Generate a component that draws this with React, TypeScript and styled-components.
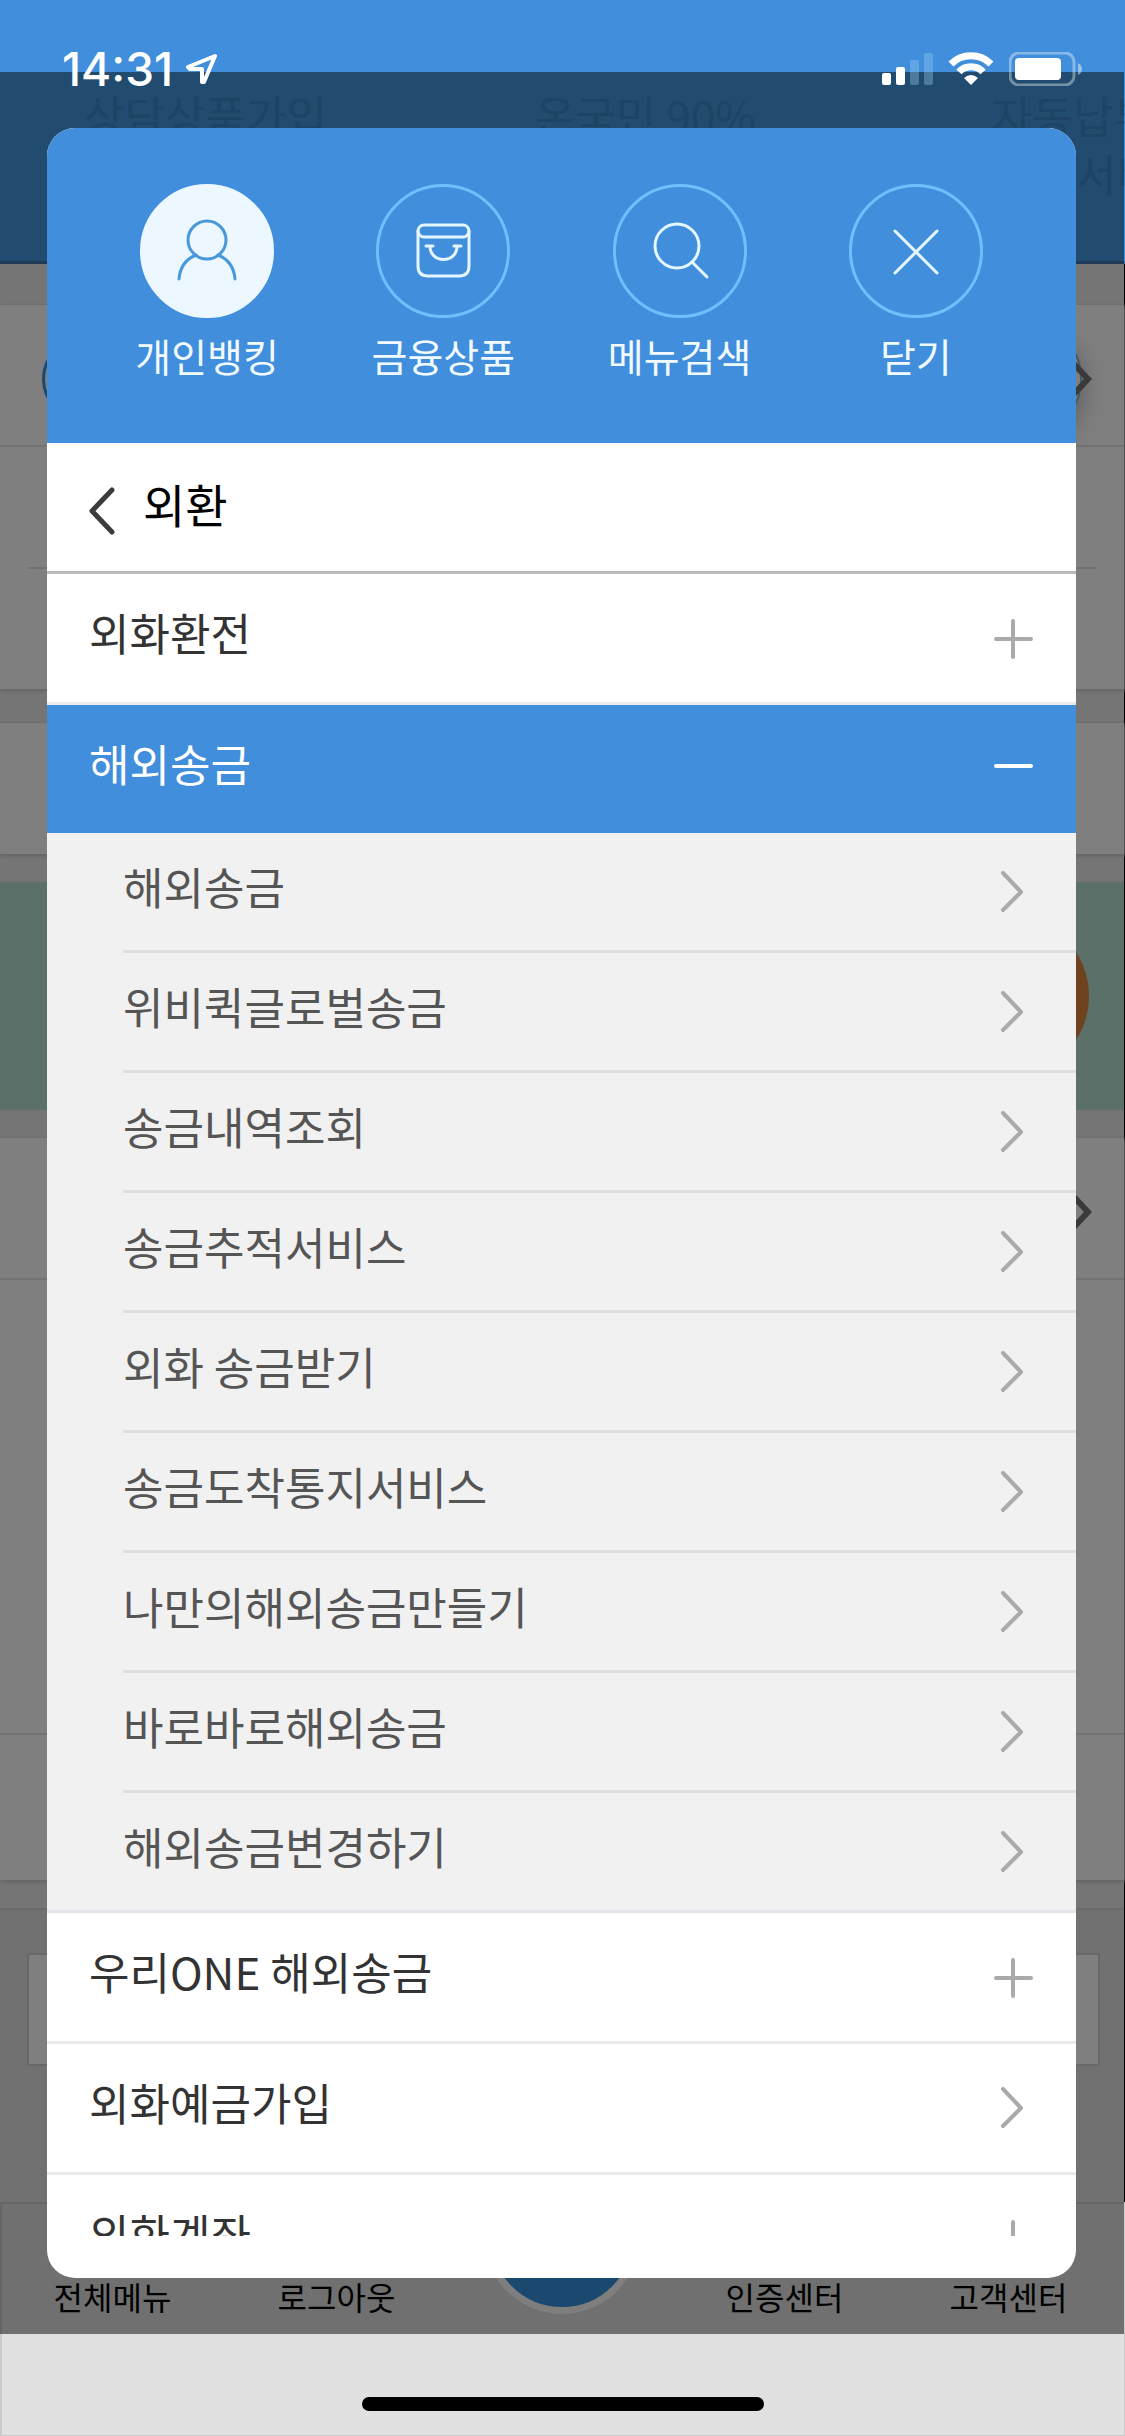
import React, { useState } from "react";
import styled, { createGlobalStyle, css } from "styled-components";

const BLUE = "#408edc";

const Global = createGlobalStyle`
  *, *::before, *::after { box-sizing: border-box; }
  body { margin: 0; background: #e1e1e1; font-family: "Noto Sans CJK KR", "Noto Sans", sans-serif; color: #333; }
  button { font: inherit; color: inherit; border: 0; background: none; padding: 0; margin: 0; cursor: pointer; text-align: left; }
  a { color: inherit; text-decoration: none; }
  ul { list-style: none; margin: 0; padding: 0; }
  svg { display: block; flex: none; }
`;

const Screen = styled.div`
  position: relative;
  min-height: 100vh;
  overflow: hidden;
  display: flex;
  flex-direction: column;
`;

/* ---------- status bar ---------- */

const StatusBar = styled.div`
  position: absolute;
  z-index: 3;
  top: 0;
  left: 0;
  right: 0;
  height: 138px;
  padding: 0 43px 0 62px;
  display: flex;
  align-items: center;
  justify-content: space-between;
  color: #fff;
`;

const Clock = styled.div`
  display: flex;
  align-items: center;
  gap: 12px;
  font: 500 46px/60px Inter, "Liberation Sans", sans-serif;
`;

const StatusIcons = styled.div`
  display: flex;
  align-items: center;
  gap: 15px;
`;

/* ---------- page behind the menu ---------- */

const Page = styled.div`
  flex: 1;
  display: flex;
  flex-direction: column;
`;

const PageHeader = styled.div`
  height: 264px;
  padding: 86px 0 0 84px;
  background: linear-gradient(${BLUE} 72px, #4298de 72px);
  border-bottom: 3px solid #3c74ae;
  display: grid;
  grid-template-columns: 451px 457px 1fr;
  overflow: hidden;
`;

const Promo = styled.div`
  font-size: 44px;
  line-height: 58px;
  color: #3a86ca;
  white-space: nowrap;
`;

const PromoLine = styled.div<{ $indent?: boolean }>`
  padding-left: ${(p) => (p.$indent ? 84 : 0)}px;
`;

const PageBody = styled.div`
  padding-top: 40px;
  border-right: 1px solid #000;
  background: #ebebeb;
  display: flex;
  flex-direction: column;
`;

const Card = styled.div<{ $h: number; $gap: number }>`
  height: ${(p) => p.$h}px;
  margin-bottom: ${(p) => p.$gap}px;
  background: #fefefe;
  border-top: 1px solid #ddd;
  box-shadow: 0 2px 4px #c4c4c4;
  display: flex;
  flex-direction: column;
`;

const CardRow = styled.div<{ $h: number; $inset?: boolean }>`
  height: ${(p) => p.$h}px;
  margin: 0 ${(p) => (p.$inset ? 28 : 0)}px;
  border-bottom: 2px solid #e4e4e4;
  display: flex;
  align-items: center;
  justify-content: space-between;
  padding: 8px 32px 0 42px;
  color: #747474;
`;

const Ring = styled.span`
  width: 84px;
  height: 84px;
  border: 3px solid #3a90cc;
  border-radius: 50%;
`;

const RowEnd = styled.span`
  display: flex;
  align-items: center;
  margin-left: auto;
`;

const Knob = styled.span`
  width: 120px;
  height: 120px;
  margin-right: -10px;
  border-radius: 50%;
  border: 2px solid #86b4c0;
  box-shadow: 0 8px 24px #b4b4b4;
`;

const Banner = styled.div`
  height: 228px;
  margin-bottom: 27px;
  padding-right: 35px;
  background: #b8e0d4;
  display: flex;
  align-items: center;
  justify-content: flex-end;
`;

const BannerDot = styled.span`
  width: 162px;
  height: 162px;
  border-radius: 50%;
  background: #de8440;
`;

const PageFooter = styled.div`
  height: 294px;
  padding: 43px 24px 0 27px;
  background: #e3e3e3;
  border-top: 2px solid #d4d4d4;
`;

const FooterBox = styled.div`
  height: 113px;
  background: #fefefe;
  border: 2px solid #d0d0d0;
`;

const TabBar = styled.nav`
  flex: 1;
  min-height: 234px;
  padding-right: 2px;
  border: 2px solid #cacaca;
  border-bottom-width: 1px;
  border-right-width: 1px;
  background: #e1e1e1;
  display: grid;
  grid-template-columns: repeat(5, 1fr);
  align-items: start;
`;

const Tab = styled.a`
  padding: 68px 3px 0 0;
  text-align: center;
  font-size: 32px;
  line-height: 48px;
  color: #000;
`;

const HomeTab = styled.a`
  justify-self: center;
  width: 156px;
  height: 156px;
  margin-top: -46px;
  border: 7px solid #fcfcfc;
  border-radius: 50%;
  background: #3690de;
`;

const Dim = styled.div`
  position: absolute;
  z-index: 1;
  top: 72px;
  right: 1px;
  bottom: 102px;
  left: 0;
  background: rgba(0, 0, 0, 0.5);
`;

const HomeIndicator = styled.div`
  position: absolute;
  z-index: 1;
  left: 50%;
  bottom: 25px;
  width: 402px;
  height: 14px;
  margin-left: -201px;
  border-radius: 7px;
  background: #000;
`;

/* ---------- menu ---------- */

const Menu = styled.div`
  position: absolute;
  z-index: 2;
  top: 128px;
  right: 49px;
  bottom: 158px;
  left: 47px;
  border-radius: 28px;
  background: #fff;
  overflow: hidden;
  display: flex;
  flex-direction: column;
`;

const MenuHeader = styled.div`
  padding: 56px 42px 58px;
  background: ${BLUE};
  display: grid;
  grid-template-columns: repeat(4, 1fr);
  justify-items: center;
`;

const Shortcut = styled.button`
  && {
    display: flex;
    flex-direction: column;
    align-items: center;
    gap: 7px;
    font-size: 39px;
    line-height: 60px;
    font-weight: 400;
    color: #f0faff;
  }
`;

const Disc = styled.span<{ $active?: boolean }>`
  width: 134px;
  height: 134px;
  border-radius: 50%;
  border: 3px solid ${(p) => (p.$active ? "#ecf7ff" : "#6fbfff")};
  background: ${(p) => (p.$active ? "#ecf7ff" : "transparent")};
  color: ${(p) => (p.$active ? "#4898da" : "#e4f6ff")};
  display: flex;
  align-items: center;
  justify-content: center;
`;

const TitleBar = styled.div`
  height: 131px;
  padding: 0 42px;
  border-bottom: 3px solid #bbb;
  display: flex;
  align-items: center;
  gap: 28px;
  color: #000;
`;

const Title = styled.h1`
  margin: 0;
  padding-bottom: 8px;
  font-size: 46px;
  line-height: 60px;
  font-weight: 400;
`;

const BackButton = styled.button`
  && {
    color: #3c3c3c;
    padding-top: 8px;
  }
`;

const Scroller = styled.div`
  flex: 1;
  min-height: 0;
  margin-bottom: 42px;
  overflow-y: auto;
  scrollbar-width: none;
`;

const rowBase = css`
  width: 100%;
  display: flex;
  align-items: center;
  justify-content: space-between;
  font-size: 44px;
  line-height: 60px;
  font-weight: 400;
`;

const rowSkin = css<{ $open?: boolean }>`
  ${rowBase}
  height: ${(p) => (p.$open ? 128 : 131)}px;
  padding: 0 42px;
  border-bottom: ${(p) => (p.$open ? "0" : "3px solid #ebebeb")};
  background: ${(p) => (p.$open ? BLUE : "#fff")};
  color: ${(p) => (p.$open ? "#fff" : "#333")};
`;

const RowButton = styled.button<{ $open?: boolean }>`
  && {
    ${rowSkin}
  }
`;

const RowLink = styled.a<{ $open?: boolean }>`
  ${rowSkin}
`;

const RowText = styled.span`
  padding-bottom: 12px;
`;

const SubList = styled.ul`
  padding-left: 76px;
  background: #f1f1f1;
  border-bottom: 3px solid #e2e6ea;
`;

const SubLink = styled.a`
  ${rowBase}
  height: 120px;
  padding-right: 42px;
  border-bottom: 3px solid #dfdfdf;
  color: #555;

  li:last-child > & {
    height: 117px;
    border-bottom: 0;
  }
`;

const RowIcon = styled.span<{ $light?: boolean }>`
  color: ${(p) => (p.$light ? "#fff" : "#aaa")};
`;

/* ---------- icons ---------- */

const stroke = { fill: "none", stroke: "currentColor", strokeLinecap: "round" as const, strokeLinejoin: "round" as const };

const Chevron = () => (
  <svg width="42" height="42" viewBox="0 0 42 42" {...stroke} strokeWidth="4" aria-hidden="true">
    <path d="M11 2 L29 21 L11 39" />
  </svg>
);

const Plus = () => (
  <svg width="42" height="42" viewBox="0 0 42 42" {...stroke} strokeWidth="4" aria-hidden="true">
    <path d="M4 22 H39 M21 4 V40" />
  </svg>
);

const Minus = () => (
  <svg width="42" height="42" viewBox="0 0 42 42" {...stroke} strokeWidth="4" aria-hidden="true">
    <path d="M4 18 H39" />
  </svg>
);

const PageChevron = () => (
  <svg width="20" height="36" viewBox="0 0 20 36" fill="none" stroke="currentColor" strokeWidth="6" aria-hidden="true">
    <path d="M2 3 L16 18 L2 33" />
  </svg>
);

const Back = () => (
  <svg width="26" height="48" viewBox="0 0 26 48" {...stroke} strokeWidth="5" aria-hidden="true">
    <path d="M23 3 L3 24 L23 45" />
  </svg>
);

const DiscIcon = ({ children }: { children: React.ReactNode }) => (
  <svg width="128" height="128" viewBox="3 3 128 128" {...stroke} strokeWidth="3" aria-hidden="true">
    {children}
  </svg>
);

const shortcuts = [
  {
    label: "개인뱅킹",
    active: true,
    icon: (
      <>
        <circle cx="67" cy="56" r="19" />
        <path d="M39 95 C40 83 46 75 56 71 M95 95 C94 83 88 75 78 71" />
      </>
    ),
  },
  {
    label: "금융상품",
    icon: (
      <>
        <path d="M42 47 V82 Q42 92 52 92 H83 Q93 92 93 82 V47" />
        <rect x="42" y="41" width="51" height="12" rx="6" />
        <path d="M50 62 H57 M78 62 H85 M54 62 C54 80 81 80 81 62" />
      </>
    ),
  },
  {
    label: "메뉴검색",
    icon: (
      <>
        <circle cx="64" cy="62" r="22" />
        <path d="M79 78 L94 93" />
      </>
    ),
  },
  { label: "닫기", icon: <path d="M46 47 L88 89 M88 47 L46 89" /> },
];

type Item = { label: string; kind: "group" | "link"; children?: string[] };

const items: Item[] = [
  { label: "외화환전", kind: "group" },
  {
    label: "해외송금",
    kind: "group",
    children: [
      "해외송금",
      "위비퀵글로벌송금",
      "송금내역조회",
      "송금추적서비스",
      "외화 송금받기",
      "송금도착통지서비스",
      "나만의해외송금만들기",
      "바로바로해외송금",
      "해외송금변경하기",
    ],
  },
  { label: "우리ONE 해외송금", kind: "group" },
  { label: "외화예금가입", kind: "link" },
  { label: "외화계좌", kind: "group" },
];

const StatusIndicators = () => (
  <StatusIcons>
    <svg width="51" height="32" viewBox="0 0 51 32" fill="#fff" aria-hidden="true">
      <rect x="0" y="20" width="9" height="12" rx="2" />
      <rect x="14" y="14" width="9" height="18" rx="2" />
      <g fill="#9fd4f4" opacity="0.35">
        <rect x="28" y="7" width="9" height="25" rx="2" />
        <rect x="42" y="0" width="9" height="32" rx="2" />
      </g>
    </svg>
    <svg width="46" height="34" viewBox="0 0 46 34" fill="none" stroke="#fff" strokeWidth="7" aria-hidden="true">
      <path d="M3 12 C14 1 32 1 43 12" />
      <path d="M11 20 C17 13 29 13 35 20" />
      <path d="M23 33 L16 26 Q23 20 30 26 Z" fill="#fff" stroke="none" />
    </svg>
    <svg width="73" height="34" viewBox="0 0 73 34" aria-hidden="true">
      <rect x="1" y="1" width="64" height="32" rx="9" fill="none" stroke="#fff" strokeOpacity="0.38" strokeWidth="3" />
      <rect x="6" y="6" width="46" height="22" rx="4" fill="#fff" />
      <path d="M69 11 Q73 13 73 17 Q73 21 69 23 Z" fill="#fff" fillOpacity="0.45" />
    </svg>
  </StatusIcons>
);

export default function App() {
  const [open, setOpen] = useState<string | null>("해외송금");

  return (
    <>
      <Global />
      <Screen>
        <StatusBar>
          <Clock>
            14:31
            <svg width="32" height="32" viewBox="0 0 32 32" {...stroke} strokeWidth="4" aria-hidden="true">
              <path d="M30 3 L3 14 L5 16 H17 V29 L19 29 Z" />
            </svg>
          </Clock>
          <StatusIndicators />
        </StatusBar>

        <Page aria-hidden="true">
          <PageHeader>
            <Promo>상담상품가입</Promo>
            <Promo>온국민 90%</Promo>
            <Promo>
              <PromoLine>자동납부</PromoLine>
              <PromoLine $indent>서비스</PromoLine>
            </Promo>
          </PageHeader>
          <PageBody>
            <Card $h={385} $gap={33}>
              <CardRow $h={142}>
                <Ring />
                <RowEnd>
                  <Knob />
                  <PageChevron />
                </RowEnd>
              </CardRow>
              <CardRow $h={122} $inset />
            </Card>
            <Card $h={132} $gap={28} />
            <Banner>
              <BannerDot />
            </Banner>
            <Card $h={743} $gap={28}>
              <CardRow $h={142}>
                <RowEnd>
                  <PageChevron />
                </RowEnd>
              </CardRow>
              <CardRow $h={455} />
            </Card>
            <PageFooter>
              <FooterBox />
            </PageFooter>
          </PageBody>
          <TabBar>
            <Tab href="#all">전체메뉴</Tab>
            <Tab href="#logout">로그아웃</Tab>
            <HomeTab href="#home" />
            <Tab href="#cert">인증센터</Tab>
            <Tab href="#help">고객센터</Tab>
          </TabBar>
        </Page>

        <Dim />
        <HomeIndicator />

        <Menu role="dialog" aria-label="외환">
          <MenuHeader>
            {shortcuts.map((s) => (
              <Shortcut key={s.label} type="button">
                <Disc $active={s.active}>
                  <DiscIcon>{s.icon}</DiscIcon>
                </Disc>
                <span>{s.label}</span>
              </Shortcut>
            ))}
          </MenuHeader>
          <TitleBar>
            <BackButton type="button" aria-label="이전">
              <Back />
            </BackButton>
            <Title>외환</Title>
          </TitleBar>
          <Scroller>
            {items.map((item) => {
              if (item.kind === "link") {
                return (
                  <RowLink key={item.label} href="#deposit">
                    <RowText>{item.label}</RowText>
                    <RowIcon>
                      <Chevron />
                    </RowIcon>
                  </RowLink>
                );
              }
              const isOpen = open === item.label;
              return (
                <React.Fragment key={item.label}>
                  <RowButton
                    type="button"
                    $open={isOpen}
                    aria-expanded={isOpen}
                    onClick={() => setOpen(isOpen ? null : item.label)}
                  >
                    <RowText>{item.label}</RowText>
                    <RowIcon $light={isOpen}>{isOpen ? <Minus /> : <Plus />}</RowIcon>
                  </RowButton>
                  {isOpen && item.children && (
                    <SubList>
                      {item.children.map((c) => (
                        <li key={c}>
                          <SubLink href="#menu">
                            <RowText>{c}</RowText>
                            <RowIcon>
                              <Chevron />
                            </RowIcon>
                          </SubLink>
                        </li>
                      ))}
                    </SubList>
                  )}
                </React.Fragment>
              );
            })}
          </Scroller>
        </Menu>
      </Screen>
    </>
  );
}
